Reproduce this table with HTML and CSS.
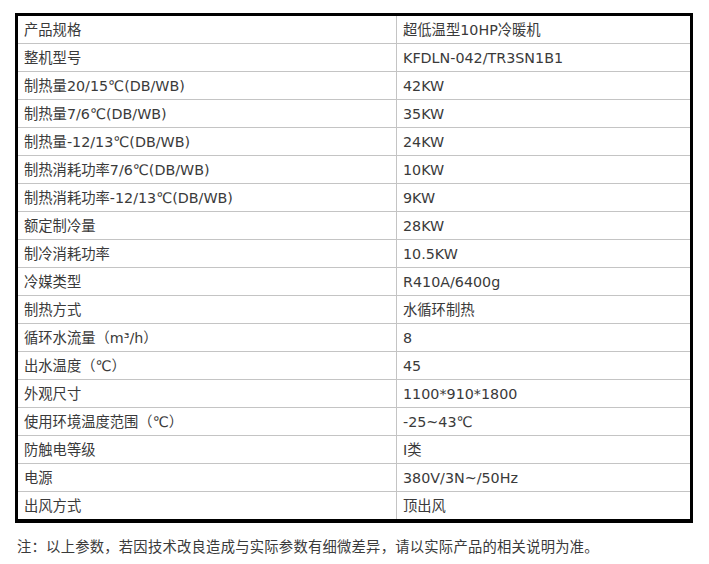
FILE: index.html
```html
<!DOCTYPE html>
<html lang="zh-CN">
<head>
<meta charset="utf-8">
<title>产品规格</title>
<link rel="stylesheet" href="styles.css">
</head>
<body>
<div class="page">
  <table class="spec">
    <tbody>
      <tr><td class="k">产品规格</td><td class="v">超低温型10HP冷暖机</td></tr>
      <tr><td class="k">整机型号</td><td class="v">KFDLN-042/TR3SN1B1</td></tr>
      <tr><td class="k">制热量20/15℃(DB/WB)</td><td class="v">42KW</td></tr>
      <tr><td class="k">制热量7/6℃(DB/WB)</td><td class="v">35KW</td></tr>
      <tr><td class="k">制热量-12/13℃(DB/WB)</td><td class="v">24KW</td></tr>
      <tr><td class="k">制热消耗功率7/6℃(DB/WB)</td><td class="v">10KW</td></tr>
      <tr><td class="k">制热消耗功率-12/13℃(DB/WB)</td><td class="v">9KW</td></tr>
      <tr><td class="k">额定制冷量</td><td class="v">28KW</td></tr>
      <tr><td class="k">制冷消耗功率</td><td class="v">10.5KW</td></tr>
      <tr><td class="k">冷媒类型</td><td class="v">R410A/6400g</td></tr>
      <tr><td class="k">制热方式</td><td class="v">水循环制热</td></tr>
      <tr><td class="k">循环水流量（m³/h）</td><td class="v">8</td></tr>
      <tr><td class="k">出水温度（℃）</td><td class="v">45</td></tr>
      <tr><td class="k">外观尺寸</td><td class="v">1100*910*1800</td></tr>
      <tr><td class="k">使用环境温度范围（℃）</td><td class="v">-25~43℃</td></tr>
      <tr><td class="k">防触电等级</td><td class="v">I类</td></tr>
      <tr><td class="k">电源</td><td class="v">380V/3N~/50Hz</td></tr>
      <tr class="last"><td class="k">出风方式</td><td class="v">顶出风</td></tr>
    </tbody>
  </table>
  <p class="note">注：以上参数，若因技术改良造成与实际参数有细微差异，请以实际产品的相关说明为准。</p>
</div>
</body>
</html>
```

FILE: styles.css
```css
html, body {
  margin: 0;
  padding: 0;
  background: #ffffff;
}

body {
  font-family: "DejaVu Sans", "Noto Sans CJK SC", sans-serif;
  color: #3a3a3a;
  font-size: 14.3px;
}

.page {
  padding: 13px 0 0 15px;
}

.spec {
  width: 678px;
  border: 3px solid #000000;
  border-bottom-width: 4px;
  border-collapse: separate;
  border-spacing: 0;
  table-layout: fixed;
}

.spec td {
  box-sizing: border-box;
  height: 28px;
  padding: 1px 6px 0;
  border-bottom: 1px solid #c4c4c4;
  vertical-align: middle;
  line-height: 26px;
  white-space: nowrap;
}

.spec .k {
  width: 379px;
  border-right: 1px solid #c4c4c4;
}

.spec .last td {
  height: 27px;
  border-bottom: none;
}

.note {
  margin: 14px 0 0 2px;
  font-size: 14.3px;
  letter-spacing: 0.25px;
  line-height: 20px;
  color: #3a3a3a;
}
```
